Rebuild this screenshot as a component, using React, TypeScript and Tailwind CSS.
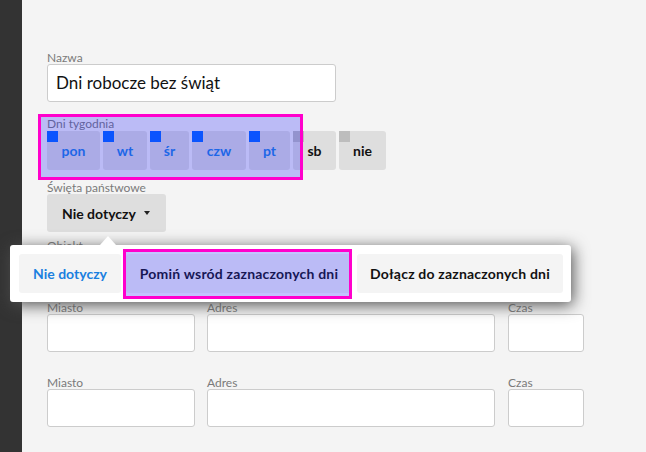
import React from 'react';

type Day = { label: string; on: boolean; width: string };

const days: Day[] = [
  { label: 'pon', on: true, width: 'w-[53px]' },
  { label: 'wt', on: true, width: 'w-[44px]' },
  { label: 'śr', on: true, width: 'w-[39px]' },
  { label: 'czw', on: true, width: 'w-[54px]' },
  { label: 'pt', on: true, width: 'w-[41px]' },
  { label: 'sb', on: false, width: 'w-[43px]' },
  { label: 'nie', on: false, width: 'w-[47px]' },
];

function Label({ children }: { children: React.ReactNode }) {
  return <div className="text-[12px] leading-[13px] text-[#7a7a7a]">{children}</div>;
}

function Highlight({ className }: { className: string }) {
  return (
    <div
      className={`pointer-events-none absolute border-[3px] border-[#ff00cc] bg-[rgba(40,40,250,0.28)] ${className}`}
    />
  );
}

function Field({ label, width }: { label: string; width: string }) {
  return (
    <div className={width}>
      <Label>{label}</Label>
      <div className="h-[38px] rounded-[3px] border border-[#cccccc] bg-white" />
    </div>
  );
}

function AddressRow() {
  return (
    <div className="flex">
      <Field label="Miasto" width="w-[148px]" />
      <div className="ml-[12px]">
        <Field label="Adres" width="w-[288px]" />
      </div>
      <div className="ml-[13px]">
        <Field label="Czas" width="w-[76px]" />
      </div>
    </div>
  );
}

export default function App() {
  return (
    <div className="relative flex h-[452px] w-[646px] overflow-hidden font-['Lato',sans-serif]">
      <div className="w-[22px] shrink-0 bg-[#333333]" />
      <div className="flex-1 bg-[#f4f4f4] pl-[25px] pt-[51px]">
        <Label>Nazwa</Label>
        <div className="flex h-[38px] w-[289px] items-center rounded-[3px] border border-[#cccccc] bg-white px-[8px] text-[17px] text-[#111]">
          Dni robocze bez świąt
        </div>

        <div className="relative mt-[15px]">
          <Label>Dni tygodnia</Label>
          <div className="mt-[1px] flex gap-[3px]">
            {days.map((d) => (
              <div
                key={d.label}
                className={`relative flex h-[39px] items-center justify-center rounded-[3px] bg-[#dedede] text-[14px] font-bold ${d.width} ${
                  d.on ? 'text-[#1a80e0]' : 'text-[#111]'
                }`}
              >
                <span
                  className={`absolute left-0 top-0 h-[11px] w-[11px] ${d.on ? 'bg-[#0066ff]' : 'bg-[#bdbdbd]'}`}
                />
                {d.label}
              </div>
            ))}
          </div>
          <Highlight className="-left-[9px] -top-[3px] h-[66px] w-[265px]" />
        </div>

        <div className="mt-[11px]">
          <Label>Święta państwowe</Label>
          <div className="flex h-[38px] w-[119px] items-center rounded-[3px] bg-[#dedede] pl-[15px] text-[14px] font-bold text-[#111]">
            Nie dotyczy
            <span className="ml-[8px] h-0 w-0 border-x-[3px] border-t-[4px] border-x-transparent border-t-[#222]" />
          </div>
        </div>

        <div className="mt-[7px]">
          <Label>Obiekt</Label>
          <div className="h-[36px]" />
        </div>

        <div className="mt-[13px]">
          <AddressRow />
        </div>
        <div className="mt-[24px]">
          <AddressRow />
        </div>
      </div>

      <div className="absolute left-[10px] top-[245px] flex w-[561px] gap-[5px] rounded-[3px] bg-white p-[9px] pr-[8px] shadow-[2px_3px_16px_rgb(80,80,80)]">
        <span className="absolute -top-[9px] left-[90px] h-0 w-0 border-x-[8px] border-b-[9px] border-x-transparent border-b-white" />
        <div className="flex h-[39px] w-[102px] items-center justify-center rounded-[3px] bg-[#f4f4f4] text-[14px] font-bold text-[#1a80e0]">
          Nie dotyczy
        </div>
        <div className="relative flex h-[39px] w-[226px] items-center justify-center rounded-[3px] bg-[#f4f4f4] text-[14px] font-bold tracking-[0.2px] text-[#111]">
          Pomiń wsród zaznaczonych dni
          <Highlight className="-left-[3px] -top-[5px] -bottom-[6px] right-0" />
        </div>
        <div className="flex h-[39px] w-[206px] items-center justify-center rounded-[3px] bg-[#f4f4f4] text-[14px] font-bold tracking-[0.2px] text-[#111]">
          Dołącz do zaznaczonych dni
        </div>
      </div>
    </div>
  );
}
